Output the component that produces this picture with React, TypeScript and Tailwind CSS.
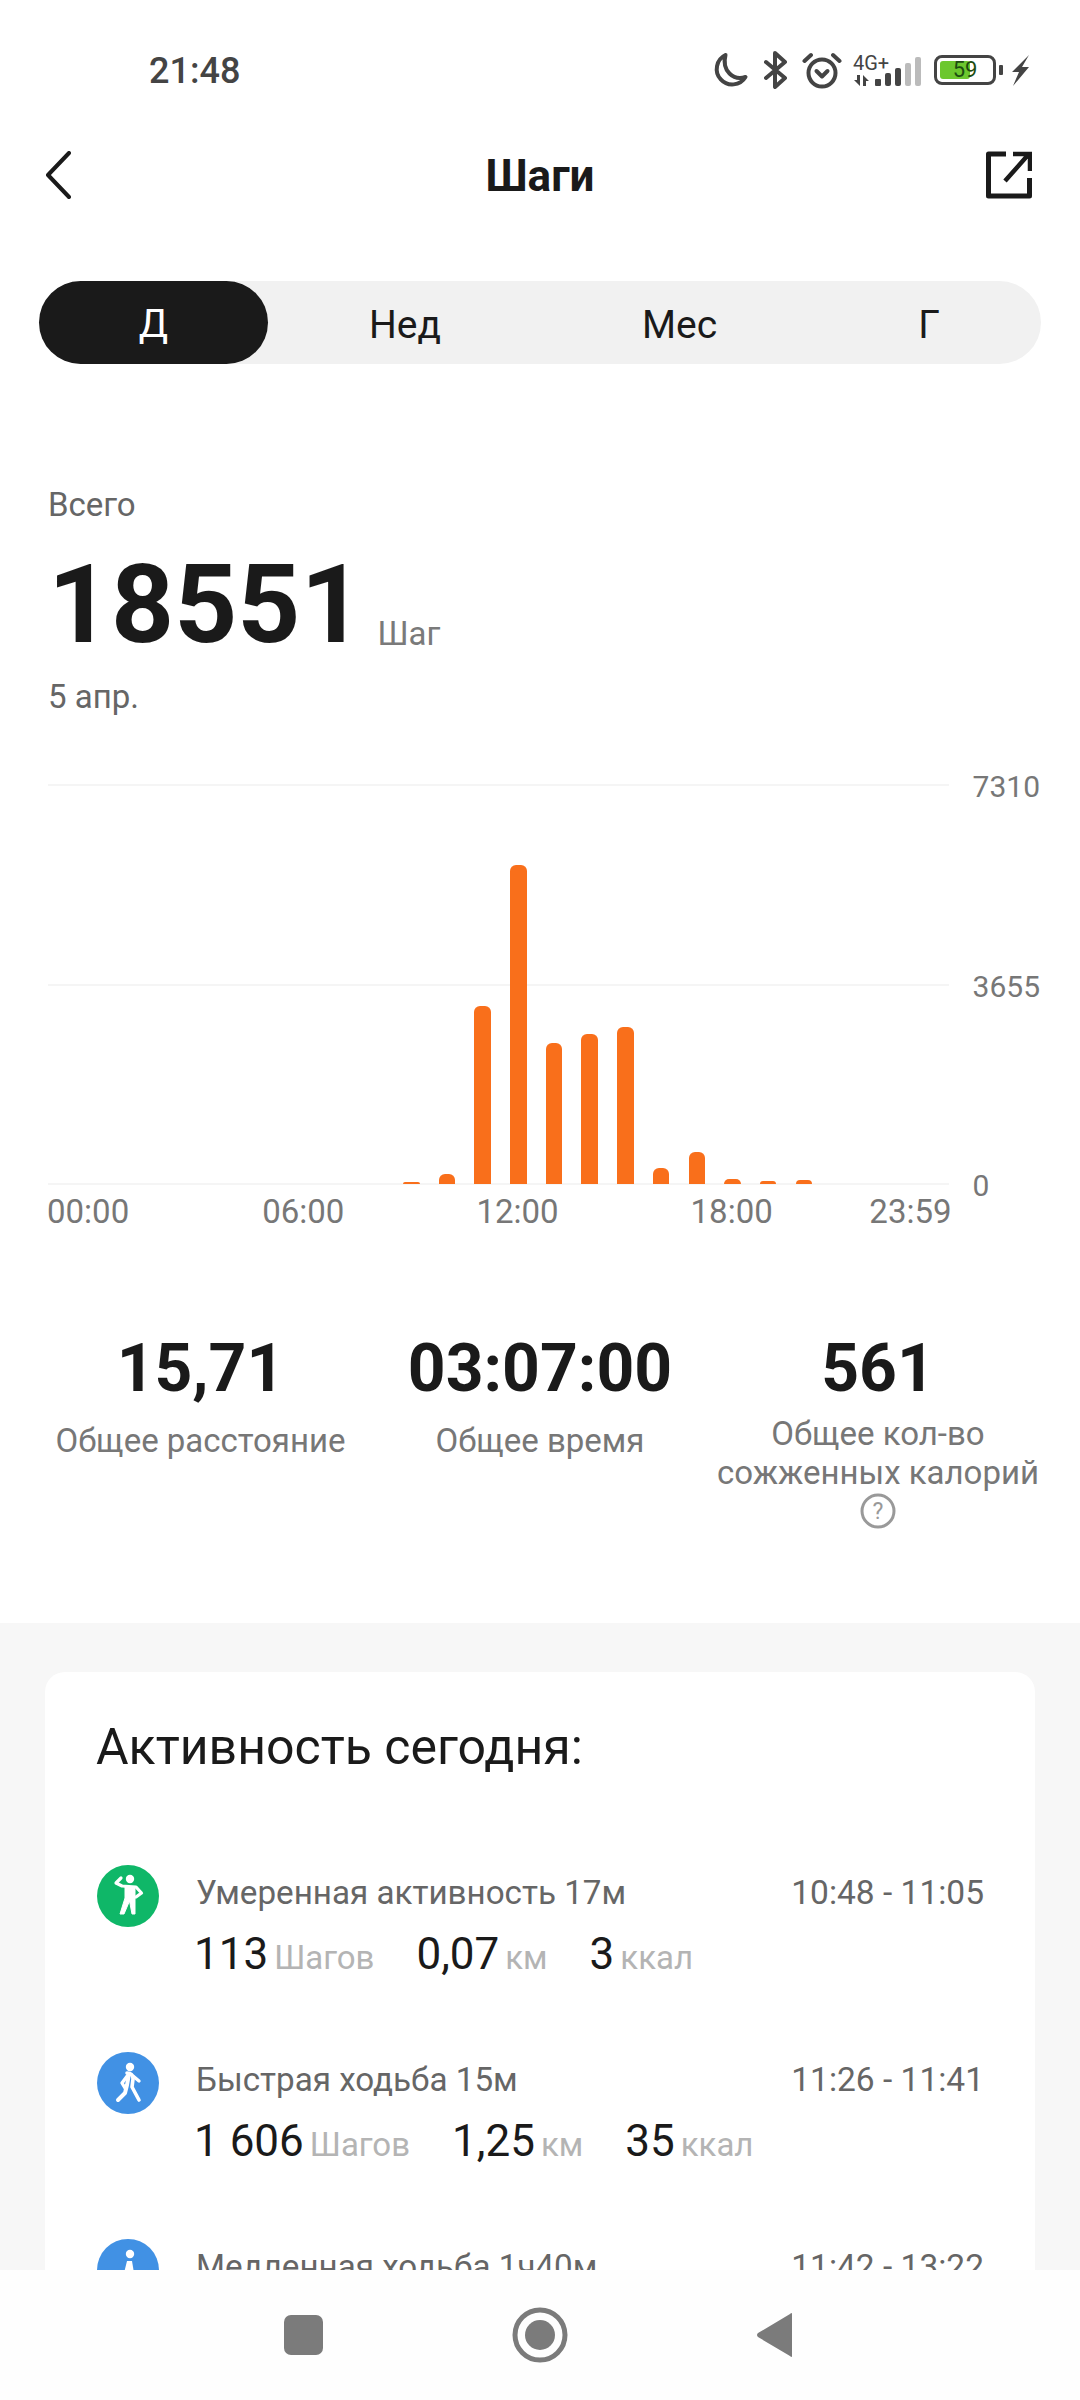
const barHeights = [2, 10, 178, 319, 141, 150, 157, 16, 32, 5, 3, 4];

function Moon() {
  return (
    <svg width="38" height="36" viewBox="0 0 37 36" fill="none" stroke="#444" strokeWidth="4">
      <path d="M14 3 A15.5 15.5 0 1 0 34 25 C 22 29 10 19 14 3 Z" strokeLinejoin="round" />
    </svg>
  );
}
function Bluetooth() {
  return (
    <svg width="24" height="38" viewBox="0 0 24 38" fill="none" stroke="#444" strokeWidth="4" strokeLinejoin="round" strokeLinecap="round">
      <path d="M2 11 L21 27 L11 36 V2 L21 11 L2 27" />
    </svg>
  );
}
function Alarm() {
  return (
    <svg width="40" height="37" viewBox="0 0 40 37" fill="none" stroke="#444" strokeLinecap="round" strokeLinejoin="round">
      <circle cx="20" cy="21" r="13.5" strokeWidth="4" />
      <path d="M14.5 19 L20 24.5 L25.5 19" strokeWidth="4" />
      <path d="M2.5 9 L9 3 M37.5 9 L31 3" strokeWidth="4" />
    </svg>
  );
}
function Signal() {
  return (
    <div className="w-[68px] relative h-[36px]">
      <span className="text-[20px] leading-[20px] text-[#444] font-['Roboto',sans-serif] absolute left-0 top-[1px]">4G+</span>
      <div className="absolute right-0 bottom-[2px] flex items-end gap-[4px]">
        <svg width="16" height="11" viewBox="0 0 16 11" fill="#444" className="mr-[1px]">
          <path d="M6 0 V11 L0 5 H3 V0 Z M9 0 L15 6 H12 V11 H9 Z" />
        </svg>
        <div className="w-[6px] h-[7px] bg-[#444] rounded-[1px]" />
        <div className="w-[6px] h-[13px] bg-[#444] rounded-[2px]" />
        <div className="w-[6px] h-[18px] bg-[#444] rounded-[2px]" />
        <div className="w-[6px] h-[23px] bg-[#bbb] rounded-[2px]" />
        <div className="w-[6px] h-[29px] bg-[#bbb] rounded-[2px]" />
      </div>
    </div>
  );
}
function Battery() {
  return (
    <div className="flex items-center gap-[3px]">
      <div className="w-[62px] h-[30px] border-[3px] border-[#444] rounded-[8px] relative p-[3px]">
        <div className="w-[30px] h-full bg-[#6cc72e] rounded-[3px]" />
        <span className="absolute inset-0 flex items-center justify-center text-[22px] leading-none text-[#1d4d10] font-['Roboto',sans-serif]">59</span>
      </div>
      <div className="w-[4px] h-[10px] bg-[#444] rounded-[1px]" />
    </div>
  );
}
function Bolt() {
  return (
    <svg width="20" height="31" viewBox="0 0 20 31" fill="#444">
      <path d="M19 0 L2 17 H9 L3 31 L19 12 H12 Z" />
    </svg>
  );
}
function Green() {
  return (
    <svg width="62" height="62" viewBox="0 0 62 62" className="shrink-0">
      <circle cx="31" cy="31" r="31" fill="#0fb768" />
      <circle cx="33" cy="14" r="4.2" fill="#fff" />
      <path d="M24 13 L19 18 L25 21 L39 22 L44.5 28 L39 32" fill="none" stroke="#fff" strokeWidth="3.2" strokeLinecap="round" strokeLinejoin="round" />
      <path d="M28 22 H38 V33 L38 49 H35 L32.5 36 L27 49 H23 L28 33 Z" fill="#fff" strokeLinejoin="round" stroke="#fff" strokeWidth="1" />
    </svg>
  );
}
function Blue({ clip }: { clip?: boolean }) {
  return (
    <svg width="62" height="62" viewBox="0 0 62 62" className="shrink-0">
      <circle cx="31" cy="31" r="31" fill="#4191e4" />
      <circle cx="33" cy="15" r="4.2" fill="#fff" />
      {clip ? (
        <path d="M30 22 H35 L37 34 H27 Z" fill="#fff" />
      ) : (
        <>
          <path d="M31 23 L25 31 L28 36 M36 24 L42 29" fill="none" stroke="#fff" strokeWidth="3.4" strokeLinecap="round" strokeLinejoin="round" />
          <path d="M30 21 Q36 21 36 27 L35 35 L42 48" fill="none" stroke="#fff" strokeWidth="3.6" strokeLinecap="round" strokeLinejoin="round" />
          <path d="M32 22 L30 33 L28 41 L21 48" fill="none" stroke="#fff" strokeWidth="4" strokeLinecap="round" strokeLinejoin="round" />
        </>
      )}
    </svg>
  );
}

function Row({ icon, title, time, vals }: { icon: React.ReactNode; title: string; time: string; vals: [string, string][] }) {
  return (
    <div className="flex h-[187px] shrink-0">
      {icon}
      <div className="flex-1 pl-[35px] mr-[1px]">
        <div className="flex justify-between items-baseline pl-[2px] mt-[7px] text-[33.2px] leading-[42px] text-[#666]">
          <span>{title}</span>
          <span className="text-[33.5px]">{time}</span>
        </div>
        <div className="flex gap-[42px] mt-[9px]">
          {vals.map(([v, u]) => (
            <div key={u} className="flex items-baseline gap-[6px]">
              <span className="text-[44px] leading-[62px] text-[#1a1a1a]">{v}</span>
              <span className="text-[33px] leading-[62px] text-[#b4b4b4]">{u}</span>
            </div>
          ))}
        </div>
      </div>
    </div>
  );
}

function Stat({ value, className, children }: { value: string; className: string; children: React.ReactNode }) {
  return (
    <div className={"flex flex-col items-center shrink-0 " + className}>
      <div className="text-[66px] leading-[76px] font-bold text-[#1a1a1a]">{value}</div>
      {children}
    </div>
  );
}

export default function App() {
  return (
    <div className="w-[1080px] h-[2400px] overflow-hidden bg-white flex flex-col font-['Roboto',sans-serif]">
      <div className="flex-1 min-h-0 overflow-hidden">
        {/* status bar */}
        <div className="h-[140px] flex items-start pt-[50px] pl-[149px] pr-[50px]">
          <span className="text-[36px] leading-[42px] font-medium text-[#444]">21:48</span>
          <div className="ml-auto flex items-center h-[40px]">
            <Moon />
            <div className="ml-[15px]"><Bluetooth /></div>
            <div className="ml-[14px]"><Alarm /></div>
            <div className="ml-[11px]"><Signal /></div>
            <div className="ml-[13px]"><Battery /></div>
            <div className="ml-[7px]"><Bolt /></div>
          </div>
        </div>

        {/* header */}
        <div className="h-[70px] flex items-center pl-[45px] pr-[48px]">
          <div className="flex-1">
            <svg width="26" height="48" viewBox="0 0 26 48" fill="none" stroke="#1a1a1a" strokeWidth="4" strokeLinecap="round" strokeLinejoin="round">
              <path d="M24 2 L3 24 L24 46" />
            </svg>
          </div>
          <span className="text-[44px] leading-[50px] font-bold text-[#1a1a1a] mt-[2px] ml-[3px]">Шаги</span>
          <div className="flex-1 flex justify-end">
            <svg width="46" height="48" viewBox="0 0 46 48" fill="none" stroke="#1a1a1a" strokeWidth="5">
              <path d="M20 3 H2.5 V45 H43.5 V27" strokeLinejoin="round" />
              <path d="M19 30 L42 4 M27 3 H44 V20" strokeWidth="4.5" />
            </svg>
          </div>
        </div>

        {/* tabs */}
        <div className="mt-[71px] mx-[39px] w-[1002px] h-[83px] bg-[#f1f1f1] rounded-[42px] flex items-center text-[39px] leading-[46px] text-[#1a1a1a]">
          <div className="w-[229px] h-full bg-[#1a1a1a] rounded-[42px] text-white flex items-center justify-center pt-[3px]">Д</div>
          <span className="ml-[101px] pt-[4px]">Нед</span>
          <span className="ml-[201px] pt-[4px]">Мес</span>
          <span className="ml-[201px] pt-[4px]">Г</span>
        </div>

        {/* total */}
        <div className="pl-[48px] mt-[122px]">
          <div className="text-[33px] leading-[40px] text-[#666] mt-[-1px]">Всего</div>
          <div className="flex items-baseline mt-[18px]">
            <span className="text-[110px] leading-[124px] font-bold text-[#1a1a1a]">18551</span>
            <span className="text-[33px] text-[#7a7a7a] ml-[14px] translate-y-[3px]">Шаг</span>
          </div>
          <div className="text-[33px] leading-[40px] text-[#666] mt-[10px]">5 апр.</div>
        </div>

        {/* chart */}
        <div className="ml-[48px] mt-[67px] flex w-[992px]">
          <div className="w-[905px]">
            <div className="h-[401px] relative flex flex-col justify-between">
              <div className="h-[2px] bg-[#f5f5f5]" />
              <div className="h-[2px] bg-[#f5f5f5]" />
              <div className="h-[2px] bg-[#f5f5f5]" />
              <div className="absolute left-[355px] bottom-[1px] flex items-end gap-[19.2px]">
                {barHeights.map((h, i) => (
                  <div key={i} className="w-[16.5px] bg-[#f96f1b] rounded-t-[6px]" style={{ height: h }} />
                ))}
              </div>
            </div>
            <div className="flex mt-[7px] mr-[-3px] ml-[-1px] text-[33px] leading-[40px] text-[#777]">
              <span>00:00</span>
              <span className="ml-[133px]">06:00</span>
              <span className="ml-[132px]">12:00</span>
              <span className="ml-[132px]">18:00</span>
              <span className="ml-auto">23:59</span>
            </div>
          </div>
          <div className="h-[403px] flex flex-col justify-between ml-[21px] mt-[1px] pl-[3px] text-[30px] leading-[4px] text-[#777]">
            <span>7310</span>
            <span>3655</span>
            <span>0</span>
          </div>
        </div>

        {/* stats */}
        <div className="mt-[99px] h-[292px] flex">
          <Stat value="15,71" className="w-[401px]">
            <div className="text-[33px] leading-[40px] text-[#777] mt-[14px]">Общее расстояние</div>
          </Stat>
          <Stat value="03:07:00" className="w-[278px]">
            <div className="text-[33px] leading-[40px] text-[#777] mt-[14px]">Общее время</div>
          </Stat>
          <Stat value="561" className="w-[401px] pr-[3px]">
            <div className="text-[33px] leading-[39px] text-[#777] text-center mt-[7px] whitespace-nowrap">
              Общее кол-во
              <br />
              сожженных калорий
            </div>
            <svg width="36" height="36" viewBox="0 0 36 36" fill="none" className="mt-[1px]">
              <circle cx="18" cy="18" r="16" stroke="#999" strokeWidth="3" />
              <text x="18" y="26" textAnchor="middle" fontSize="23" fontFamily="Roboto, sans-serif" fill="#999">?</text>
            </svg>
          </Stat>
        </div>

        {/* gray section */}
        <div className="bg-[#f7f7f7] pt-[49px] px-[45px] h-[700px]">
          <div className="bg-white rounded-[20px] h-[700px] pl-[52px] pr-[50px] pt-[46px]">
            <div className="text-[50px] leading-[58px] text-[#1a1a1a] mb-[89px] ml-[-1px]">Активность сегодня:</div>
            <div className="flex flex-col">
              <Row
                icon={<Green />}
                title="Умеренная активность 17м"
                time="10:48 - 11:05"
                vals={[["113", "Шагов"], ["0,07", "км"], ["3", "ккал"]]}
              />
              <Row
                icon={<Blue />}
                title="Быстрая ходьба 15м"
                time="11:26 - 11:41"
                vals={[["1 606", "Шагов"], ["1,25", "км"], ["35", "ккал"]]}
              />
              <Row icon={<Blue clip />} title="Медленная ходьба 1ч40м" time="11:42 - 13:22" vals={[]} />
            </div>
          </div>
        </div>
      </div>

      {/* nav bar */}
      <div className="h-[130px] shrink-0 bg-[#fefefe] relative z-10 flex items-center pl-[284px]">
        <div className="w-[39px] h-[40px] bg-[#7b7b7b] rounded-[7px]" />
        <svg width="56" height="56" viewBox="0 0 56 56" className="ml-[189px]">
          <circle cx="28" cy="28" r="25" fill="none" stroke="#7b7b7b" strokeWidth="5" />
          <circle cx="28" cy="28" r="15" fill="#7b7b7b" />
        </svg>
        <svg width="38" height="48" viewBox="0 0 38 48" className="ml-[188px]">
          <path d="M36 3 V45 Q36 47 34 45 L2 26 Q0 24 2 22 L34 3 Q36 1 36 3 Z" fill="#7b7b7b" />
        </svg>
      </div>
    </div>
  );
}
